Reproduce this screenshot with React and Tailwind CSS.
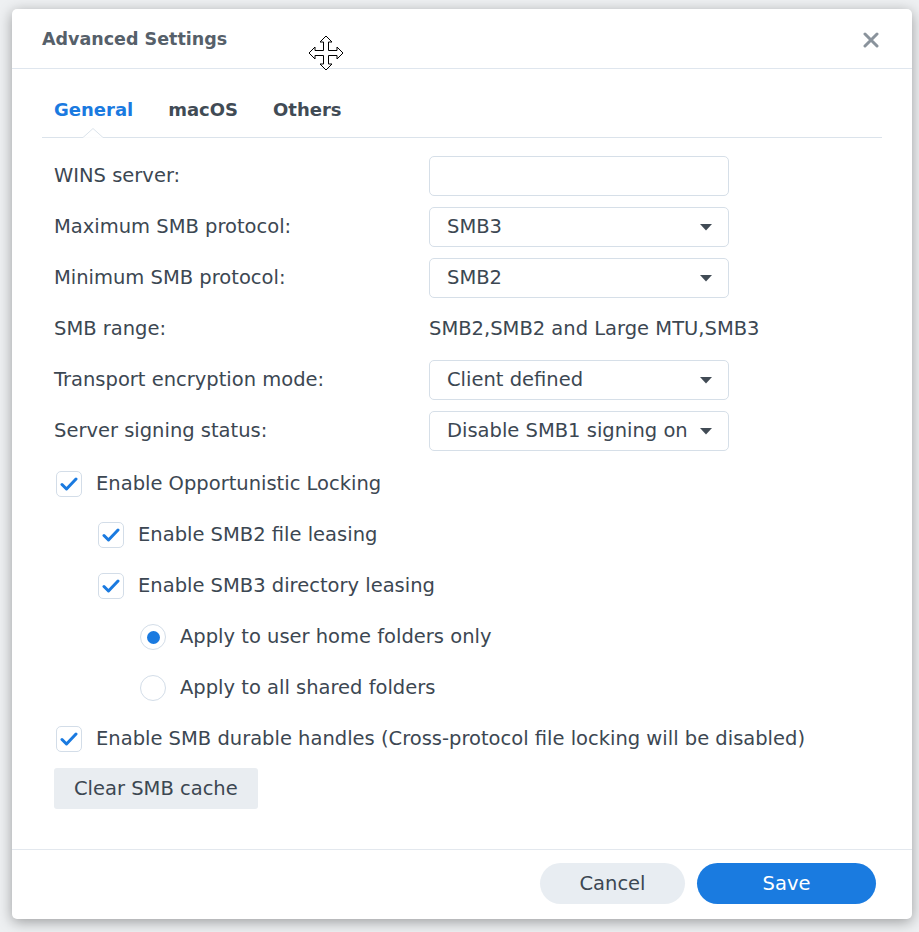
import React, { useState } from 'react';

const font = { fontFamily: '"DejaVu Sans", Verdana, sans-serif' };

function Caret() {
    return (
        <svg width="12" height="7" viewBox="0 0 12 7" className="shrink-0">
            <path d="M0 0 L12 0 L6 6.5 Z" fill="#414b55" />
        </svg>
    );
}

function Select({ value }) {
    return (
        <div className="w-[300px] h-10 flex items-center justify-between pl-[17px] pr-[16px] border border-[#d6dfe8] rounded-[5px] bg-white">
            <span className="truncate whitespace-nowrap text-[#3c4752]">{value}</span>
            <Caret />
        </div>
    );
}

function Row({ label, children }) {
    return (
        <div className="flex items-center h-10">
            <div className="w-[375px] shrink-0 text-[#3c4752]">{label}</div>
            {children}
        </div>
    );
}

function Checkbox({ checked, label, indent = '' }) {
    return (
        <div className={'flex items-center h-10 ' + indent}>
            <span className="w-[26px] h-[26px] ml-[2px] rounded-[5px] border border-[#d3dde8] bg-white flex items-center justify-center shrink-0">
                {checked && (
                    <svg width="18" height="14" viewBox="0 0 18 14">
                        <path d="M2 7.5 L6.5 12 L16 2" fill="none" stroke="#1a7ae0" strokeWidth="3" strokeLinecap="round" strokeLinejoin="round" />
                    </svg>
                )}
            </span>
            <span className="ml-[14px] text-[#3c4752] whitespace-nowrap">{label}</span>
        </div>
    );
}

function Radio({ checked, label }) {
    return (
        <div className="flex items-center h-10 pl-[84px]">
            <span className="w-[26px] h-[26px] ml-[2px] rounded-full border border-[#d3dde8] bg-white flex items-center justify-center shrink-0">
                {checked && <span className="w-[13px] h-[13px] rounded-full bg-[#1a7ae0]" />}
            </span>
            <span className="ml-[14px] text-[#3c4752] whitespace-nowrap">{label}</span>
        </div>
    );
}

function MoveCursor() {
    return (
        <svg width="36" height="36" viewBox="0 0 36 36" className="absolute left-[296px] top-[26px]">
            <path
                d="M18 1 L24 7 L20.5 7 L20.5 15.5 L29 15.5 L29 12 L35 18 L29 24 L29 20.5 L20.5 20.5 L20.5 29 L24 29 L18 35 L12 29 L15.5 29 L15.5 20.5 L7 20.5 L7 24 L1 18 L7 12 L7 15.5 L15.5 15.5 L15.5 7 L12 7 Z"
                fill="white"
                stroke="black"
                strokeWidth="1"
            />
        </svg>
    );
}

export default function App() {
    const [tab] = useState('General');

    return (
        <div className="h-[932px] w-[919px] overflow-hidden bg-[#eef0f2] pt-[9px] pl-[12px] text-[19.5px]" style={font}>
            <div className="relative w-[900px] h-[910px] bg-white rounded-[5px] shadow-[0_3px_14px_rgba(0,0,0,0.35)] flex flex-col">
                {/* header */}
                <div className="h-[60px] shrink-0 flex items-center justify-between pl-[30px] pr-[33px] pt-[2px] border-b border-[#dfe6ee]">
                    <h2 className="font-bold text-[17.5px] text-[#56606a]">Advanced Settings</h2>
                    <button className="text-[#8a939c]">
                        <svg width="16" height="16" viewBox="0 0 16 16">
                            <path d="M2 2 L14 14 M14 2 L2 14" stroke="currentColor" strokeWidth="3" strokeLinecap="round" />
                        </svg>
                    </button>
                </div>
                <MoveCursor />

                {/* tabs */}
                <div className="mx-[30px] pt-[20px] pb-2 border-b border-[#dbe3eb] relative">
                    <div className="flex gap-[35px] pl-3 h-10 items-center font-bold text-[18px]">
                        {['General', 'macOS', 'Others'].map((t) => (
                            <span key={t} className={t === tab ? 'text-[#1a7ae0]' : 'text-[#414b55]'}>
                                {t}
                            </span>
                        ))}
                    </div>
                    <svg width="20" height="10" viewBox="0 0 20 10" className="absolute left-[41px] bottom-[-1px]">
                        <path d="M0 9.5 L10 0.5 L20 9.5" fill="white" stroke="#dbe3eb" strokeWidth="1" />
                        <path d="M0.5 10 L19.5 10" stroke="white" strokeWidth="1.5" />
                    </svg>
                </div>

                {/* form */}
                <div className="flex-1 px-[42px] pt-[18px] flex flex-col">
                    <div className="flex flex-col gap-[11px]">
                        <Row label="WINS server:">
                            <div className="w-[300px] h-10 border border-[#d6dfe8] rounded-[5px] bg-white" />
                        </Row>
                        <Row label="Maximum SMB protocol:">
                            <Select value="SMB3" />
                        </Row>
                        <Row label="Minimum SMB protocol:">
                            <Select value="SMB2" />
                        </Row>
                        <Row label="SMB range:">
                            <span className="text-[#3c4752] whitespace-nowrap">SMB2,SMB2 and Large MTU,SMB3</span>
                        </Row>
                        <Row label="Transport encryption mode:">
                            <Select value="Client defined" />
                        </Row>
                        <Row label="Server signing status:">
                            <Select value="Disable SMB1 signing on" />
                        </Row>
                    </div>
                    <div className="flex flex-col gap-[11px] mt-[13px]">
                        <Checkbox checked label="Enable Opportunistic Locking" />
                        <Checkbox checked indent="pl-[42px]" label="Enable SMB2 file leasing" />
                        <Checkbox checked indent="pl-[42px]" label="Enable SMB3 directory leasing" />
                        <Radio checked label="Apply to user home folders only" />
                        <Radio label="Apply to all shared folders" />
                        <Checkbox checked label="Enable SMB durable handles (Cross-protocol file locking will be disabled)" />
                    </div>
                    <div className="mt-[9px]">
                        <button className="h-[41px] px-5 rounded-[3px] bg-[#e9edf1] text-[#3c4752]">Clear SMB cache</button>
                    </div>
                </div>

                {/* footer */}
                <div className="shrink-0 border-t border-[#e3e8ee] pt-[13px] pb-[15px] pr-[36px] flex justify-end gap-3">
                    <button className="w-[145px] h-[41px] rounded-full bg-[#e8edf2] text-[#3c4752]">Cancel</button>
                    <button className="w-[179px] h-[41px] rounded-full bg-[#1a7be0] text-white">Save</button>
                </div>
            </div>
        </div>
    );
}
